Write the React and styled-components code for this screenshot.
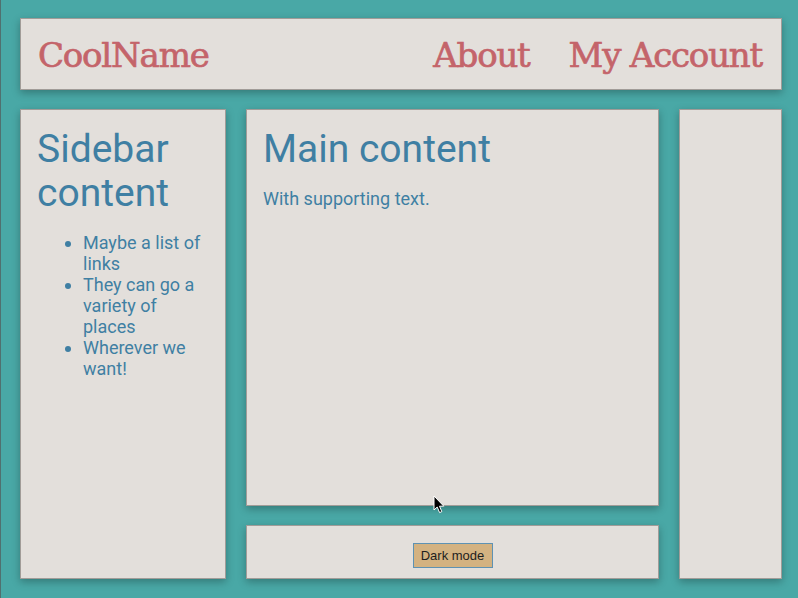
import React from "react";
import styled, { createGlobalStyle } from "styled-components";

const Global = createGlobalStyle`
  html, body { margin: 0; padding: 0; height: 100%; }
  body {
    background: #49a8a6;
    font-family: Roboto, "Liberation Sans", sans-serif;
    font-size: 18px;
    color: #3f7fa3;
    overflow: hidden;
  }
  #root { height: 100%; }
`;

const Page = styled.div`
  position: relative;
  box-sizing: border-box;
  height: 598px;
  border-left: 1px solid #50706f;
  padding: 18px 16px 19px 19px;
  display: grid;
  grid-template-columns: 206px 413px 1fr;
  grid-template-rows: 72px 1fr 54px;
  gap: 19px 20px;
  grid-template-areas:
    "header header header"
    "side main aside"
    "side footer aside";
`;

const Card = styled.div`
  box-sizing: border-box;
  background: #e3dfdb;
  border: 1px solid #a19c98;
  box-shadow: 0 3px 8px rgba(0, 0, 0, 0.28);
  padding: 17px 16px 16px;
  grid-area: ${(p) => p.$area};
  min-width: 0;
`;

const Header = styled(Card)`
  display: flex;
  align-items: center;
  justify-content: space-between;
  padding: 1px 19px 0 17px;
  font-family: "DejaVu Serif", "Liberation Serif", serif;
  font-size: 34px;
  letter-spacing: -1.2px;
  line-height: 38px;
  color: #c4646a;
  -webkit-text-stroke: 0.7px #c4646a;
`;

const Brand = styled.div``;

const Nav = styled.nav`
  display: flex;
  gap: 39px;
`;

const NavLink = styled.span``;

const Heading = styled.h1`
  margin: 0 0 17px;
  font-size: 39px;
  font-weight: 400;
  line-height: 44px;
`;

const Text = styled.p`
  margin: 0;
`;

const List = styled.ul`
  margin: 0;
  padding-left: 46px;
`;

const Footer = styled(Card)`
  display: flex;
  justify-content: center;
  align-items: flex-start;
  padding: 18px 16px 0;
`;

const Button = styled.button`
  box-sizing: border-box;
  width: 80px;
  height: 25px;
  background: #d3b281;
  border: 1px solid #5e92b3;
  font-family: "Liberation Sans", Arial, sans-serif;
  font-size: 13px;
  color: #1e1e1e;
  padding: 0;
  margin-top: -1px;
`;

const Cursor = styled.svg`
  position: absolute;
  left: 432px;
  top: 495px;
  width: 12px;
  height: 19px;
`;

export default function App() {
  return (
    <>
      <Global />
      <Page>
        <Header $area="header">
          <Brand>CoolName</Brand>
          <Nav>
            <NavLink>About</NavLink>
            <NavLink>My Account</NavLink>
          </Nav>
        </Header>
        <Card $area="side">
          <Heading>Sidebar content</Heading>
          <List>
            <li>Maybe a list of links</li>
            <li>They can go a variety of places</li>
            <li>Wherever we want!</li>
          </List>
        </Card>
        <Card $area="main">
          <Heading>Main content</Heading>
          <Text>With supporting text.</Text>
        </Card>
        <Footer $area="footer">
          <Button>Dark mode</Button>
        </Footer>
        <Card $area="aside" />
        <Cursor viewBox="0 0 12 19">
          <path
            d="M1 1 L1 15 L4.2 12 L6.6 17.6 L8.8 16.6 L6.5 11.2 L10.8 11.2 Z"
            fill="#000"
            stroke="#fff"
            strokeWidth="1"
            strokeLinejoin="round"
          />
        </Cursor>
      </Page>
    </>
  );
}
